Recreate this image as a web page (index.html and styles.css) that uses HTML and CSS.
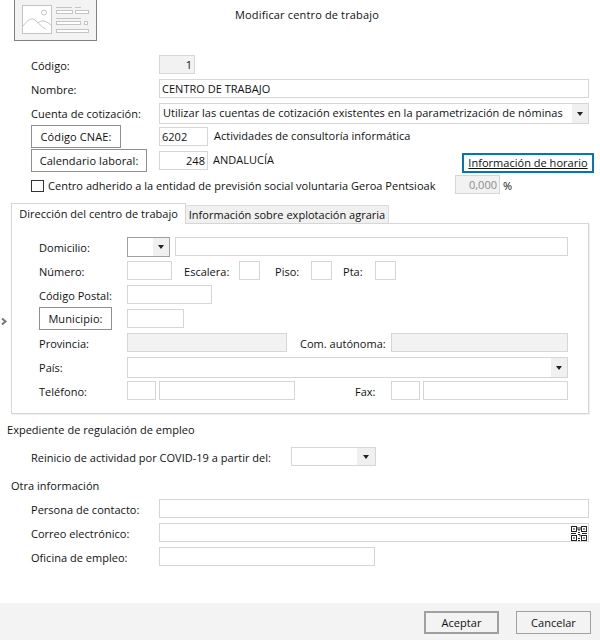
FILE: index.html
```html
<!DOCTYPE html>
<html lang="es">
<head>
    <meta charset="UTF-8">
    <title>Modificar centro de trabajo</title>
    <link rel="stylesheet" href="styles.css">
</head>
<body>
    <div class="dialog">
        <!-- Cabecera -->
        <header class="head">
            <div class="thumb">
                <svg width="82" height="41" viewBox="14 0 82 41" fill="none" stroke="#c4c4c4">
                    <rect x="22.5" y="5.5" width="29" height="28" fill="#fff"/>
                    <circle cx="44" cy="12.5" r="2.5"/>
                    <path d="M23 26 C27 21 31 17 35 20 C39 23 41 27 46 29 M38 23 C41 20 45 20 51 25"/>
                    <path d="M56 7.500H72M75 7.500H81"/>
                    <rect x="56.500" y="10.500" width="16" height="3" fill="#fff"/>
                    <rect x="75.500" y="10.500" width="13" height="3" fill="#fff"/>
                    <path d="M56 18.500H81"/>
                    <rect x="56.500" y="21.500" width="24" height="3" fill="#fff"/>
                    <rect x="84.500" y="21.500" width="3" height="3" fill="#fff"/>
                    <rect x="56.500" y="29.500" width="32" height="3" fill="#fff"/>
                </svg>
            </div>
            <h1 class="title">Modificar centro de trabajo</h1>
        </header>

        <!-- Datos generales -->
        <section class="rows main top">
            <div class="row">
                <label class="lbl">Código:</label>
                <input class="field off w36 num" type="text" value="1" readonly>
            </div>
            <div class="row">
                <label class="lbl">Nombre:</label>
                <input class="field grow" type="text" value="CENTRO DE TRABAJO">
            </div>
            <div class="row">
                <label class="lbl">Cuenta de cotización:</label>
                <div class="select tall grow">
                    <span class="select-text">Utilizar las cuentas de cotización existentes en la parametrización de nóminas</span>
                    <span class="arrow"></span>
                </div>
            </div>
            <div class="row">
                <div class="lbl"><button class="btn w90" type="button">Código CNAE:</button></div>
                <input class="field w49" type="text" value="6202">
                <span class="desc cnae">Actividades de consultoría informática</span>
            </div>
            <div class="row">
                <div class="lbl"><button class="btn w116" type="button">Calendario laboral:</button></div>
                <input class="field w49 num" type="text" value="248">
                <span class="desc">ANDALUCÍA</span>
                <a class="info" href="#">Información de horario</a>
            </div>
            <div class="row">
                <span class="check"></span>
                <span class="check-text">Centro adherido a la entidad de previsión social voluntaria Geroa Pentsioak</span>
                <input class="field off w45 num muted" type="text" value="0,000" readonly>
                <span class="desc pct">%</span>
            </div>
        </section>

        <!-- Pestañas -->
        <div class="tabs">
            <div class="tab active">Dirección del centro de trabajo</div>
            <div class="tab">Información sobre explotación agraria</div>
        </div>
        <section class="panel">
            <div class="rows">
                <div class="row">
                    <label class="lbl short">Domicilio:</label>
                    <div class="select dark w43"><span class="select-text"></span><span class="arrow"></span></div>
                    <input class="field grow gap5" type="text">
                </div>
                <div class="row">
                    <label class="lbl short">Número:</label>
                    <input class="field w45" type="text">
                    <label class="lbl-in escalera">Escalera:</label>
                    <input class="field w21" type="text">
                    <label class="lbl-in piso">Piso:</label>
                    <input class="field w21" type="text">
                    <label class="lbl-in pta">Pta:</label>
                    <input class="field w21" type="text">
                </div>
                <div class="row">
                    <label class="lbl short">Código Postal:</label>
                    <input class="field w85" type="text">
                </div>
                <div class="row">
                    <div class="lbl short"><button class="btn w73" type="button">Municipio:</button></div>
                    <input class="field w57" type="text">
                </div>
                <div class="row">
                    <label class="lbl short">Provincia:</label>
                    <input class="field off w160" type="text" readonly>
                    <label class="lbl-in autonoma">Com. autónoma:</label>
                    <input class="field off grow" type="text" readonly>
                </div>
                <div class="row">
                    <label class="lbl short">País:</label>
                    <div class="select tall grow"><span class="select-text"></span><span class="arrow"></span></div>
                </div>
                <div class="row">
                    <label class="lbl short">Teléfono:</label>
                    <input class="field w29" type="text">
                    <input class="field w136 gap3" type="text">
                    <label class="lbl-in fax">Fax:</label>
                    <input class="field w29" type="text">
                    <input class="field grow gap3" type="text">
                </div>
            </div>
        </section>

        <!-- Expediente -->
        <h2 class="group first">Expediente de regulación de empleo</h2>
        <div class="row covid">
            <label class="lbl wide">Reinicio de actividad por COVID-19 a partir del:</label>
            <div class="select w85"><span class="select-text"></span><span class="arrow wide-arrow"></span></div>
        </div>

        <!-- Otra informacion -->
        <h2 class="group second">Otra información</h2>
        <section class="rows main">
            <div class="row">
                <label class="lbl">Persona de contacto:</label>
                <input class="field grow" type="text">
            </div>
            <div class="row">
                <label class="lbl">Correo electrónico:</label>
                <div class="qr-wrap grow">
                    <input class="field full" type="text">
                    <svg class="qr" width="16" height="15" viewBox="0 0 16 15" fill="none" stroke="#222">
                        <rect x=".5" y=".5" width="5" height="5"/>
                        <rect x="10.500" y=".5" width="5" height="5"/>
                        <rect x=".5" y="9.500" width="5" height="5"/>
                        <rect x="10.500" y="9.500" width="5" height="5"/>
                        <path d="M2 3h2M12 3h2M2 12h2M12 12h2M7 1v3h2V1M0 7.500h5M7 6.500h2M11 7.500h5M7 8.500h2v2M7 12.500h2M7 14.500h2"/>
                    </svg>
                </div>
            </div>
            <div class="row">
                <label class="lbl">Oficina de empleo:</label>
                <input class="field w216" type="text">
            </div>
        </section>

        <footer class="foot">
            <button class="foot-btn default" type="button">Aceptar</button>
            <button class="foot-btn" type="button">Cancelar</button>
        </footer>

        <svg class="chevron" width="7" height="7" viewBox="0 0 7 7" fill="none" stroke="#777" stroke-width="2"><path d="M1 .5L4.500 3.500L1 6.500"/></svg>
    </div>
</body>
</html>
```

FILE: styles.css
```css
* {
    margin: 0;
    padding: 0;
    box-sizing: border-box;
    font-family: "Open Sans", "Noto Sans", sans-serif;
    font-size: 11px;
    font-weight: 400;
    letter-spacing: 0.02px;
    color: #111;
}
html, body {
    height: 100%;
    background: #fff;
    overflow: hidden;
}
.dialog {
    position: relative;
    width: 600px;
    height: 640px;
    display: flex;
    flex-direction: column;
}

/* cabecera */
.head {
    display: flex;
    height: 41px;
    padding-left: 14px;
}
.thumb {
    width: 83px;
    height: 42px;
    margin-top: -1px;
    padding-top: 1px;
    border: 1px solid #808080;
    border-top: none;
    background: #f3f3f3;
}
.thumb svg {
    display: block;
    margin-left: -1px;
}
.title {
    width: 420px;
    text-align: center;
    letter-spacing: 0.15px;
    line-height: 29px;
}

/* filas de 24px */
.rows {
    display: grid;
    grid-auto-rows: 24px;
}
.main {
    padding: 0 11px 0 31px;
}
.main.top {
    margin-top: 14px;
}
.row {
    display: flex;
    align-items: flex-start;
}
.lbl {
    width: 128px;
    flex: none;
    line-height: 21px;
}
.lbl.short {
    width: 88px;
}
.lbl.wide {
    width: 260px;
}
.lbl-in {
    flex: none;
    line-height: 21px;
}
.escalera { width: 67px; padding-left: 12px; }
.piso { width: 51px; padding-left: 15px; }
.pta { width: 43px; padding-left: 11px; }
.autonoma { width: 104px; padding-left: 13px; }
.fax { width: 96px; padding-left: 60px; }
.grow {
    flex: 1;
    min-width: 0;
}

/* campos */
.field {
    height: 19px;
    border: 1px solid #d6d6d6;
    background: #fff;
    padding: 0 2px;
    outline: none;
    flex: none;
}
.field.grow {
    flex: 1;
}
.field.off {
    background: #f2f2f2;
}
.num {
    text-align: right;
}
.muted {
    color: #8a8a8a;
}
.full {
    width: 100%;
    display: block;
}
.gap3 {
    margin-left: 3px;
}
.gap5 {
    margin-left: 5px;
}
.w21 { width: 21px; }
.w29 { width: 29px; }
.w36 { width: 36px; }
.w43 { width: 43px; flex: none; }
.w45 { width: 45px; }
.w49 { width: 49px; }
.w57 { width: 57px; }
.w85 { width: 85px; flex: none; }
.w136 { width: 136px; }
.w160 { width: 160px; }
.w216 { width: 216px; }

.select {
    display: flex;
    height: 19px;
    border: 1px solid #d6d6d6;
    background: #fff;
}
.select.tall {
    height: 21px;
}
.select.dark {
    height: 20px;
    border-color: #a0a0a0;
}
.select-text {
    flex: 1;
    padding-left: 3px;
    line-height: 18px;
    white-space: nowrap;
    overflow: hidden;
}
.arrow {
    width: 16px;
    flex: none;
    display: flex;
    align-items: center;
    justify-content: center;
    background: #f0f0f0;
}
.wide-arrow {
    width: 18px;
}
.arrow::after {
    content: "";
    border-style: solid;
    border-width: 4px 3.500px 0;
    border-color: #222 transparent transparent;
}

/* botones */
.btn {
    display: block;
    height: 23px;
    margin-top: -2px;
    border: 1px solid #8f8f8f;
    background: #fff;
    text-align: center;
    letter-spacing: 0.1px;
}
.w90 { width: 90px; }
.w116 { width: 116px; }
.w73 { width: 73px; }
.desc {
    line-height: 17px;
    margin-left: 5px;
}
.desc.cnae {
    margin-left: 6px;
}
.desc.pct {
    margin-left: 3px;
    line-height: 21px;
}
.info {
    height: 20px;
    width: 132px;
    margin: 2px -5px 0 auto;
    border: 2px solid #0078b4;
    text-align: center;
    line-height: 16px;
    text-decoration: underline;
}
.check {
    width: 13px;
    height: 12px;
    flex: none;
    margin-top: 5px;
    border: 1px solid #333;
}
.check-text {
    width: 411px;
    flex: none;
    line-height: 21px;
    padding-left: 4px;
}

/* pestañas */
.tabs {
    display: flex;
    align-items: flex-start;
    height: 20px;
    margin: 4px 11px 0;
}
.tab {
    height: 18px;
    width: 203px;
    margin-top: 2px;
    background: #f0f0f0;
    border: 1px solid #dcdcdc;
    border-left: none;
    border-bottom: none;
    text-align: center;
    line-height: 18px;
}
.tab.active {
    position: relative;
    z-index: 1;
    width: 175px;
    height: 21px;
    margin-top: 0;
    background: #fff;
    border-left: 1px solid #d6d6d6;
    border-color: #d6d6d6;
    line-height: 19px;
}
.panel {
    margin: 0 11px;
    height: 191px;
    padding: 13px 21px 0 27px;
    border: 1px solid #d6d6d6;
    box-shadow: 1px 1px 0 #f0f0f0;
}

/* bloque inferior */
.group {
    line-height: 19px;
}
.group.first {
    margin-top: 6px;
    padding-left: 7px;
}
.group.second {
    margin-top: 10px;
    margin-bottom: 4px;
    padding-left: 11px;
}
.covid {
    height: 19px;
    margin-top: 8px;
    padding-left: 31px;
}
.qr-wrap {
    position: relative;
}
.qr {
    position: absolute;
    top: 3px;
    right: 2px;
}
.foot {
    margin-top: auto;
    height: 37px;
    padding: 8px 9px 0 0;
    display: flex;
    justify-content: flex-end;
    gap: 17px;
    background: #f3f3f3;
}
.foot-btn {
    width: 75px;
    height: 23px;
    border: 1px solid #a0a0a0;
    background: #f3f3f3;
}
.foot-btn.default {
    border: 2px solid #a0a0a0;
}
.chevron {
    position: absolute;
    left: 1px;
    top: 318px;
}
```
